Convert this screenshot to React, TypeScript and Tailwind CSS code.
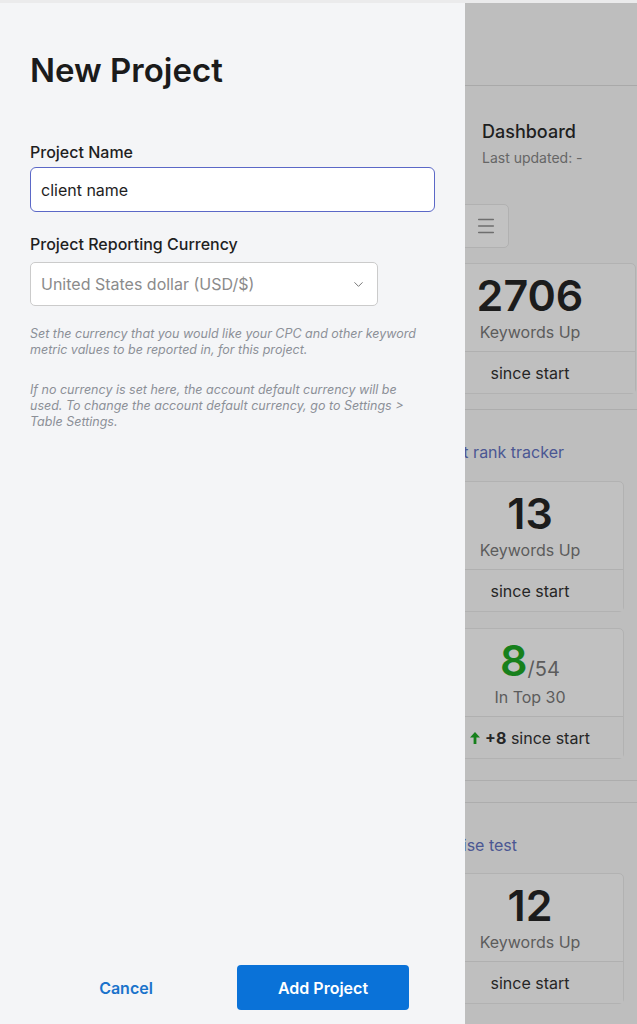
import { ChevronDown, Menu } from "lucide-react";

function StatCard({
  value,
  label,
  footer,
  wide,
}: {
  value: React.ReactNode;
  label: string;
  footer: React.ReactNode;
  wide?: boolean;
}) {
  return (
    <div
      className={`${wide ? "-ml-[41px] w-[212px]" : "-ml-[29px] w-[188px]"} rounded-[5px] border border-[#b2b2b2] bg-[#c1c1c1] text-center`}
    >
      <div className="border-b border-[#b0b0b0] pt-[7px] pb-[7px]">
        <div className="flex h-[48px] items-center justify-center text-[43px] leading-[48px] font-semibold text-[#1c1c1c]">
          {value}
        </div>
        <div className="mt-[1px] text-[16px] leading-[24px] text-[#5c5c5c]">{label}</div>
      </div>
      <div className="flex h-[41px] items-center justify-center bg-[#bfbfbf] text-[16px] text-[#262626]">
        {footer}
      </div>
    </div>
  );
}

export default function App() {
  return (
    <div className="flex h-[1024px] w-[637px] flex-col overflow-hidden font-['Inter','Roboto',sans-serif]">
      <div className="h-[3px] shrink-0 bg-[#ebebec]" />
      <div className="flex min-h-0 flex-1">
        {/* New project drawer */}
        <div className="relative z-10 flex w-[465px] shrink-0 flex-col bg-[#f4f5f7] px-[30px]">
          <h1 className="mt-[47px] text-[33px] leading-[40px] font-semibold text-[#1b1b1b]">New Project</h1>

          <label className="mt-[50px] text-[16px] leading-[24px] font-medium text-[#1f1f1f]">Project Name</label>
          <input
            defaultValue="client name"
            className="mt-[3px] h-[45px] w-[405px] rounded-[6px] border border-[#5b68c7] bg-white px-[10px] text-[16px] text-[#1e1e1e] outline-none"
          />

          <label className="mt-[20px] text-[16px] leading-[24px] font-medium text-[#1f1f1f]">
            Project Reporting Currency
          </label>
          <div className="mt-[6px] flex h-[44px] w-[348px] items-center justify-between rounded-[5px] border border-[#cbcbcb] bg-white pr-[11px] pl-[10px]">
            <span className="text-[16px] text-[#8b8b8b]">United States dollar (USD/$)</span>
            <ChevronDown size={15} strokeWidth={1.6} className="text-[#777]" />
          </div>

          <p className="mt-[20px] w-[400px] text-[12.5px] leading-[16px] text-[#8c9097] italic">
            Set the currency that you would like your CPC and other keyword metric values to be reported in, for
            this project.
          </p>
          <p className="mt-[24px] w-[385px] text-[12.5px] leading-[16px] text-[#8c9097] italic">
            If no currency is set here, the account default currency will be used. To change the account default
            currency, go to Settings &gt; Table Settings.
          </p>

          <div className="mt-auto mb-[14px] flex gap-[15px]">
            <button className="h-[45px] w-[192px] text-[16px] font-semibold text-[#1a73cb]">Cancel</button>
            <button className="h-[45px] w-[172px] rounded-[4px] bg-[#0a72d8] text-[16px] font-semibold text-white">
              Add Project
            </button>
          </div>
        </div>

        {/* Dashboard behind the overlay */}
        <div className="flex min-w-0 flex-1 flex-col bg-[#bebebe]">
          <div className="h-[83px] shrink-0 border-b border-[#a9a9a9]" />
          <div className="mt-[34px] pl-[17px] text-[18px] leading-[24px] font-medium text-[#1f1f1f]">Dashboard</div>
          <div className="mt-[4px] pl-[17px] text-[14px] leading-[20px] text-[#666]">Last updated: -</div>

          <div className="mt-[36px] -ml-[15px] flex h-[44px] w-[59px] items-center justify-end rounded-[5px] border border-[#b1b1b1] bg-[#c2c2c2] pr-[11px]">
            <Menu size={22} strokeWidth={1.6} className="text-[#6e6e6e]" />
          </div>

          <div className="mt-[15px]">
            <StatCard wide value="2706" label="Keywords Up" footer="since start" />
          </div>

          <div className="mt-[15px] -ml-[60px] border-b border-[#adadad]" />

          <div className="mt-[30px] -ml-[100px] w-[199px] text-right text-[16px] leading-[24px] text-[#4b5793]">
            Test rank tracker
          </div>

          <div className="mt-[17px]">
            <StatCard value="13" label="Keywords Up" footer="since start" />
          </div>
          <div className="mt-[16px]">
            <StatCard
              value={
                <span className="flex items-baseline">
                  <span className="text-[#17801c]">8</span>
                  <span className="text-[20px] leading-none font-normal text-[#5c5c5c]">/54</span>
                </span>
              }
              label="In Top 30"
              footer={
                <span className="flex items-center gap-[5px]">
                  <svg width="10" height="12" viewBox="0 0 10 12" className="text-[#17801c]">
                    <path d="M5 0 L10 5.5 H6.4 V12 H3.6 V5.5 H0 Z" fill="currentColor" />
                  </svg>
                  <span>
                    <span className="font-bold">+8</span> since start
                  </span>
                </span>
              }
            />
          </div>

          <div className="mt-[21px] -ml-[60px] border-b border-[#adadad]" />
          <div className="mt-[21px] -ml-[60px] border-b border-[#adadad]" />

          <div className="mt-[30px] -ml-[100px] w-[152px] text-right text-[16px] leading-[24px] text-[#4b5793]">
            Enterprise test
          </div>

          <div className="mt-[16px]">
            <StatCard value="12" label="Keywords Up" footer="since start" />
          </div>
        </div>
      </div>
    </div>
  );
}
